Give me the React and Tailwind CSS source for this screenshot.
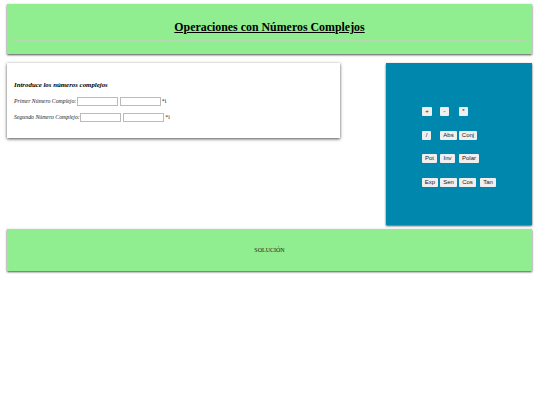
const rows = [
  [["+", "w-[10px]"], ["-", "w-[9px]"], ["*", "w-[9px]"]],
  [["/", "w-[9px]"], ["Abs", "w-[17px]"], ["Conj", "w-[18px]"]],
  [["Pot", "w-[15px]"], ["Inv", "w-[15px]"], ["Polar", "w-[20px]"]],
  [["Exp", "w-[16px]"], ["Sen", "w-[17px]"], ["Cos", "w-[17px]"], ["Tan", "w-[16px]"]],
];

function ComplexRow({ label }) {
  return (
    <div className="flex items-center h-[9px] text-[5.8px] italic text-[#222]">
      <span>{label}</span>
      <input className="w-[41px] h-[9px] ml-[0.5px] bg-white border border-[#bbb]" />
      <input className="w-[41px] h-[9px] ml-[2px] bg-white border border-[#bbb]" />
      <span className="ml-[1px] not-italic">*i</span>
    </div>
  );
}

export default function App() {
  return (
    <div className="w-[540px] h-[405px] bg-white pl-[7px] pr-[8px] pt-[4px] font-['Liberation_Serif',serif] text-black">
      <header className="h-[50px] bg-[#90ee90] shadow-[0_1px_2px_rgba(0,0,0,0.7)] px-[7px] pt-[16px]">
        <h1 className="text-center text-[11.9px] leading-[15px] font-bold underline">
          Operaciones con Números Complejos
        </h1>
        <hr className="mt-[5px] border-t border-[#b5d8b0]" />
      </header>

      <div className="flex justify-between items-start mt-[9px]">
        <section className="w-[333px] h-[75px] bg-white shadow-[0_1px_3px_rgba(0,0,0,0.7)] px-[7px] pt-[17px]">
          <h2 className="text-[6.85px] leading-[9px] font-bold italic">Introduce los números complejos</h2>
          <div className="mt-[8px] flex flex-col gap-[7px]">
            <ComplexRow label="Primer Número Complejo:" />
            <ComplexRow label="Segundo Número Complejo:" />
          </div>
        </section>

        <aside className="w-[146px] h-[162px] bg-[#0087ad] shadow-[0_1px_2px_rgba(0,0,0,0.7)] pl-[36px] pt-[44px]">
          <div className="flex flex-col gap-[14.5px]">
            {rows.map((row, i) => (
              <div key={i} className="grid grid-cols-[18px_19px_21px_auto] h-[9px]">
                {row.map(([text, width]) => (
                  <button
                    key={text}
                    className={`${width} h-[9px] bg-[#efefef] text-[#222] text-[6px] leading-[9px] font-['Liberation_Sans',sans-serif] rounded-[1px]`}
                  >
                    {text}
                  </button>
                ))}
              </div>
            ))}
          </div>
        </aside>
      </div>

      <section className="mt-[4px] h-[42px] bg-[#90ee90] shadow-[0_1px_2px_rgba(0,0,0,0.7)] flex items-center justify-center">
        <p className="text-[6px] text-[#222]">SOLUCIÓN</p>
      </section>
    </div>
  );
}
